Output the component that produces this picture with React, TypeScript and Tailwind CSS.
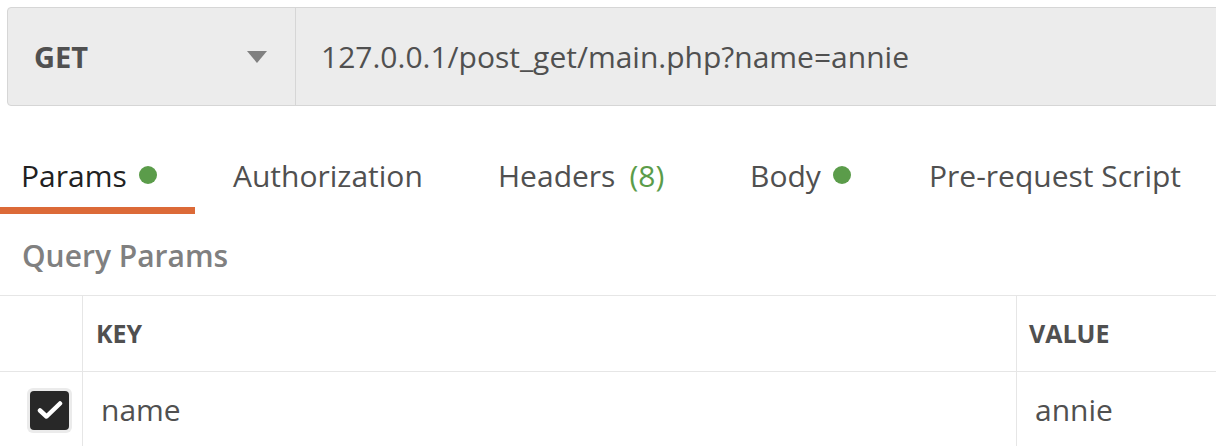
import React from "react";

const font = { fontFamily: '"Open Sans", "Liberation Sans", sans-serif' };

function Dot() {
  return <span className="ml-[12px] inline-block h-[18px] w-[18px] rounded-full bg-[#5b9c4a]" />;
}

export default function App() {
  return (
    <div className="h-[446px] w-[1216px] overflow-hidden bg-white" style={font}>
      {/* Request bar */}
      <div className="pl-[7px] pt-[7px]">
        <div className="flex h-[99px] w-[1240px] rounded-l-[4px] border border-[#d6d6d6] bg-[#ececec]">
          <div className="flex w-[288px] shrink-0 items-center border-r border-[#d6d6d6] pl-[26px] pr-[28px]">
            <span className="text-[29px] font-bold text-[#505050]">GET</span>
            <svg className="ml-auto" width="20" height="12" viewBox="0 0 20 12">
              <path d="M0 0 L20 0 L10 12 Z" fill="#808080" />
            </svg>
          </div>
          <div className="flex items-center pl-[25px] text-[30px] text-[#505050]">
            127.0.0.1/post_get/main.php?name=annie
          </div>
        </div>
      </div>

      {/* Tabs */}
      <div className="mt-[34px] flex h-[74px] items-stretch text-[30px] text-[#505050]">
        <div className="relative flex w-[195px] shrink-0 items-center pb-[4px] pl-[21px] text-[#212121]">
          Params
          <Dot />
          <div className="absolute bottom-0 left-0 h-[7px] w-[195px] bg-[#dc6a38]" />
        </div>
        <div className="flex w-[265px] shrink-0 items-center pb-[4px] pl-[38px]">Authorization</div>
        <div className="flex w-[252px] shrink-0 items-center pb-[4px] pl-[38px]">
          Headers<span className="ml-[14px] text-[#5b9c4a]">(8)</span>
        </div>
        <div className="flex w-[179px] shrink-0 items-center pb-[4px] pl-[38px]">
          Body
          <Dot />
        </div>
        <div className="flex shrink-0 items-center whitespace-nowrap pb-[4px] pl-[38px]">Pre-request Script</div>
      </div>

      {/* Query Params */}
      <div className="flex h-[81px] items-center pl-[22px] pt-[2px] text-[30px] font-semibold text-[#808080]">
        Query Params
      </div>

      {/* Table */}
      <div className="border-t border-[#e6e6e6]">
        <div className="flex h-[76px] border-b border-[#e6e6e6]">
          <div className="w-[83px] shrink-0 border-r border-[#e6e6e6]" />
          <div className="flex w-[934px] shrink-0 items-center border-r border-[#e6e6e6] pl-[13px] text-[25px] font-bold text-[#505050]">
            KEY
          </div>
          <div className="flex items-center pl-[12px] text-[25px] font-bold text-[#505050]">VALUE</div>
        </div>
        <div className="flex h-[76px]">
          <div className="flex w-[83px] shrink-0 items-center justify-end border-r border-[#e6e6e6] pr-[10px]">
            <div className="flex h-[45px] w-[45px] items-center justify-center rounded-[6px] bg-[#ebebeb]">
              <div className="flex h-[39px] w-[39px] items-center justify-center rounded-[4px] bg-[#282828]">
                <svg width="26" height="20" viewBox="0 0 26 20">
                  <path d="M3 10.5 L9.5 16.5 L23 3.5" fill="none" stroke="#ffffff" strokeWidth="4.5" strokeLinecap="round" strokeLinejoin="round" />
                </svg>
              </div>
            </div>
          </div>
          <div className="flex w-[934px] shrink-0 items-center border-r border-[#e6e6e6] pb-[2px] pl-[18px] text-[30px] text-[#505050]">
            name
          </div>
          <div className="flex items-center pb-[2px] pl-[18px] text-[30px] text-[#505050]">annie</div>
        </div>
      </div>
    </div>
  );
}
